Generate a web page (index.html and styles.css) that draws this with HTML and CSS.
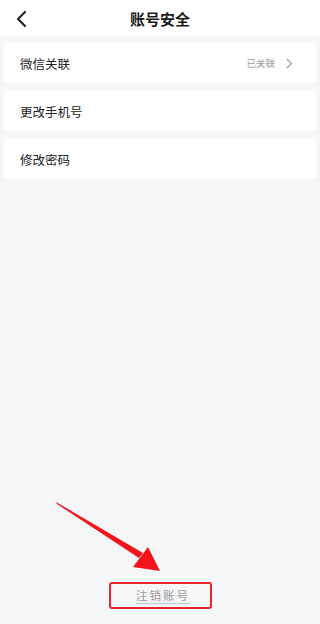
FILE: index.html
```html
<!DOCTYPE html>
<html lang="zh-CN">
<head>
    <meta charset="UTF-8">
    <meta name="viewport" content="width=device-width, initial-scale=1.0">
    <title>账号安全</title>
    <link rel="stylesheet" href="styles.css">
</head>
<body>
    <div class="page">
        <div class="header">
            <svg class="back" width="12" height="18" viewBox="0 0 12 18">
                <path d="M10 2 L3 9 L10 16" fill="none" stroke="#222" stroke-width="2.2" stroke-linecap="round" stroke-linejoin="round"/>
            </svg>
            <div class="title">账号安全</div>
        </div>
        <div class="list">
            <div class="row">
                <span class="label">微信关联</span>
                <span class="extra">已关联
                    <svg class="arrow" width="7" height="11" viewBox="0 0 7 11">
                        <path d="M1 1 L5.5 5.5 L1 10" fill="none" stroke="#999" stroke-width="1.1"/>
                    </svg>
                </span>
            </div>
            <div class="row"><span class="label">更改手机号</span></div>
            <div class="row"><span class="label">修改密码</span></div>
        </div>
        <div class="footer">
            <div class="cancel-box">
                <span class="cancel">注销账号</span>
            </div>
        </div>
        <svg class="pointer" width="320" height="624" viewBox="0 0 320 624">
            <path d="M56 502 L143 553 L139 558 L57 504 Z" fill="#f5141a"/>
            <path d="M148 547 L160 571 L133 567 Z" fill="#f5141a"/>
        </svg>
    </div>
</body>
</html>
```

FILE: styles.css
```css
* {
    box-sizing: border-box;
}
body {
    margin: 0;
    font-family: "Noto Sans CJK SC", "Noto Sans", sans-serif;
    background-color: #f5f6f8;
}
.page {
    position: relative;
    width: 320px;
    height: 624px;
    display: flex;
    flex-direction: column;
}
.header {
    position: relative;
    height: 36px;
    background: #fff;
    display: flex;
    align-items: center;
    justify-content: center;
}
.back {
    position: absolute;
    left: 15px;
    top: 10px;
}
.title {
    font-size: 15px;
    font-weight: bold;
    color: #1a1a1a;
}
.list {
    display: flex;
    flex-direction: column;
    gap: 8px;
    padding: 7px 3px 0;
}
.row {
    height: 40px;
    background: #fff;
    border-radius: 3px;
    display: flex;
    align-items: center;
    justify-content: space-between;
    padding: 0 24px 0 17px;
}
.label {
    font-size: 12.5px;
    color: #222;
}
.extra {
    display: flex;
    align-items: center;
    gap: 11px;
    font-size: 9.5px;
    color: #999;
}
.footer {
    margin-top: auto;
    display: flex;
    justify-content: center;
    padding-bottom: 15px;
}
.cancel-box {
    width: 103px;
    height: 27px;
    border: 2px solid #e8262a;
    border-radius: 3px;
    display: flex;
    align-items: center;
    justify-content: center;
    padding-left: 6px;
}
.cancel {
    font-size: 11.5px;
    letter-spacing: 2px;
    color: #999;
    border-bottom: 1px solid #ccc;
    line-height: 15px;
}
.pointer {
    position: absolute;
    left: 0;
    top: 0;
    pointer-events: none;
}
```
